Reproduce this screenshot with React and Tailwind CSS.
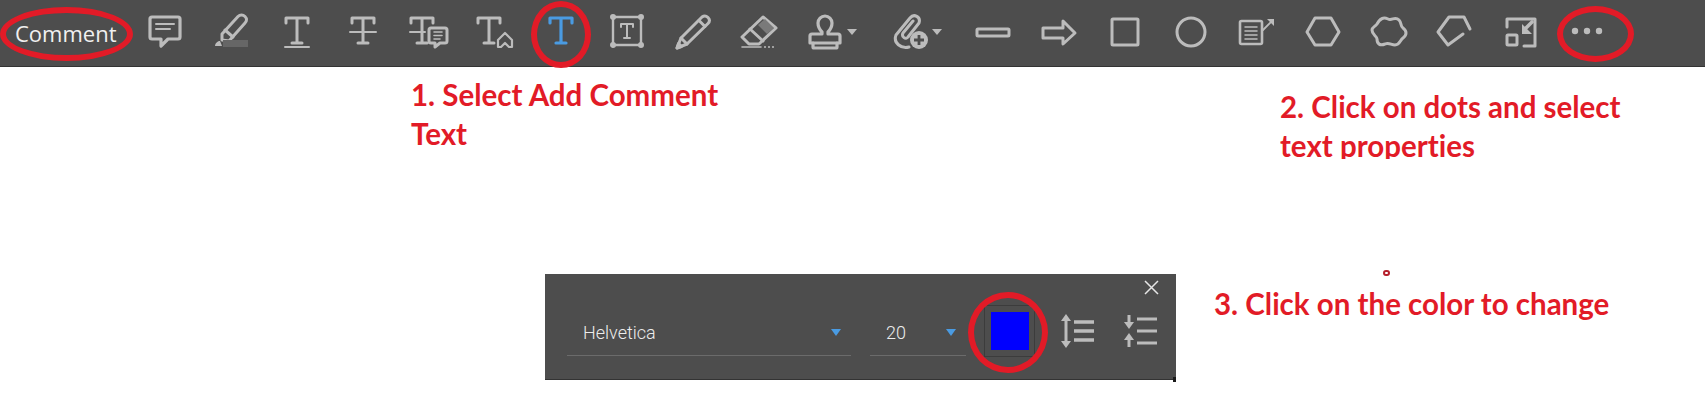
const stroke = "#bcbcbc";

function Box({ children, color = stroke, sw = 3 }) {
  return (
    <svg width="40" height="40" viewBox="0 0 40 40" fill="none" stroke={color} strokeWidth={sw} strokeLinecap="round" strokeLinejoin="round">
      {children}
    </svg>
  );
}

function SerifT({ x = 0, y = 0, w = 22, h = 25 }) {
  const r = x + w;
  const m = x + w / 2;
  const b = y + h;
  return (
    <path d={`M${x} ${y + 5}V${y}H${r}V${y + 5}M${m} ${y}V${b}M${m - 5} ${b}H${m + 5}`} />
  );
}

const icons = {
  note: (
    <Box sw={3.2}>
      <path d="M7 4H33A2 2 0 0 1 35 6V24A2 2 0 0 1 33 26H23L16 33V26H7A2 2 0 0 1 5 24V6A2 2 0 0 1 7 4Z" />
      <path d="M11 11H29M11 16H25" strokeWidth="2" />
    </Box>
  ),
  highlight: (
    <Box>
      <path d="M11 21L27 3.500C29 1.500 32 1.500 34 3.500C36 5.500 36 8 34 10L18 28L11 27Z" />
      <path d="M14 17L22 24" />
      <path d="M4 33C4 30 7 28 9 28L11 33Z" fill={stroke} stroke="none" />
      <rect x="12" y="27" width="25" height="7" fill="#666666" stroke="none" />
    </Box>
  ),
  underline: (
    <Box>
      <SerifT x={9} y={5} />
      <path d="M8 34H32" strokeWidth="2" />
    </Box>
  ),
  strike: (
    <Box>
      <SerifT x={9} y={5} />
      <path d="M7 19H33" strokeWidth="2" fill="none" />
    </Box>
  ),
  replace: (
    <Box>
      <SerifT x={2} y={5} />
      <path d="M1 19H16" strokeWidth="2" />
      <path d="M22 15H36A2 2 0 0 1 38 17V28A2 2 0 0 1 36 30H31L26 34V30H22A2 2 0 0 1 20 28V17A2 2 0 0 1 22 15Z" fill="#4d4d4d" />
      <path d="M25 19H33M25 22.500H33M25 26H31" strokeWidth="1.600" />
    </Box>
  ),
  caret: (
    <Box>
      <SerifT x={3} y={5} />
      <path d="M23 27L30 20L37 27V34H34L30 30L26 34H23Z" strokeWidth="2.200" fill="#4d4d4d" />
    </Box>
  ),
  blueT: (
    <Box color="#4a9be2" sw={3.2}>
      <SerifT x={9} y={5} />
    </Box>
  ),
  textbox: (
    <Box sw={2.400}>
      <rect x="6" y="4" width="28" height="28" />
      <circle cx="6" cy="4" r="1.800" />
      <circle cx="34" cy="4" r="1.800" />
      <circle cx="6" cy="32" r="1.800" />
      <circle cx="34" cy="32" r="1.800" />
      <path d="M14 14V11H26V14M20 11V25M17 25H23" strokeWidth="2" />
    </Box>
  ),
  pencil: (
    <Box>
      <path d="M4 35L8 25L29 4C31 2.500 33 2.500 35 4.500C37 6.500 37 8.500 35 10.500L14 31Z" />
      <path d="M8 25L14 31M26 7.500L32 13.500" />
      <path d="M4 35L5.500 30.500L8.500 33.500Z" fill={stroke} />
    </Box>
  ),
  eraser: (
    <Box>
      <path d="M3 24L24 4L37 15L20 31H10Z" />
      <path d="M11 16L24 28" />
      <path d="M19 12L26 6L35 15L28 21Z" fill="#7a7a7a" stroke="none" />
      <path d="M3 34H22" strokeWidth="1.600" />
      <path d="M25 34H37" strokeWidth="1.600" strokeDasharray="2 2" strokeLinecap="butt" />
    </Box>
  ),
  stamp: (
    <Box sw={3.2}>
      <path d="M17 19C14 16 13 13 13 10A7 7 0 0 1 27 10C27 13 26 16 23 19V21H33A2 2 0 0 1 35 23V30H5V23A2 2 0 0 1 7 21H17Z" />
      <path d="M8 30V34A1 1 0 0 0 9 35H31A1 1 0 0 0 32 34V30" />
    </Box>
  ),
  clip: (
    <Box sw={3}>
      <path d="M19 34C11 36 3 30 6 22L20 5C24 0 31 4 29 10L18 24C16 27 11 24 13 20L23 8" />
      <circle cx="29" cy="27" r="9" fill={stroke} stroke="none" />
      <path d="M29 22V32M24 27H34" stroke="#4d4d4d" strokeWidth="2.800" strokeLinecap="butt" />
    </Box>
  ),
  line: (
    <Box>
      <rect x="4" y="16" width="32" height="7" rx="1" />
    </Box>
  ),
  arrow: (
    <Box>
      <path d="M4 15H24V8L36 20L24 31V25H4Z" />
    </Box>
  ),
  rect: (
    <Box>
      <rect x="7" y="6" width="26" height="26" rx="1" />
    </Box>
  ),
  circle: (
    <Box>
      <circle cx="20" cy="19" r="14" />
    </Box>
  ),
  callout: (
    <Box sw={2.6}>
      <rect x="3" y="8" width="22" height="23" rx="1.500" />
      <path d="M8 14H20M8 18H20M8 22H20M8 26H20" strokeWidth="1.500" />
      <path d="M26 17L36 7" strokeWidth="1.800" />
      <path d="M30 6H37V13Z" fill={stroke} stroke="none" />
    </Box>
  ),
  hexagon: (
    <Box>
      <path d="M4 19L12 5H28L36 19L28 32H12Z" />
    </Box>
  ),
  cloud: (
    <Box>
      <path d="M8 11C11 5 15 4 19 6C23 8 26 3 30 7C33 10 31 13 34 15C38 18 38 22 34 25C31 27 31 32 26 32C22 32 20 29 16 31C11 33 8 31 8 26C8 23 3 22 3 17C3 14 6 14 8 11Z" />
    </Box>
  ),
  polygon: (
    <Box>
      <path d="M35 16L29 4H14L3 19L13 32L28 21" />
    </Box>
  ),
  fit: (
    <Box>
      <path d="M6 14V6H34V33H23" />
      <rect x="6" y="22" width="10" height="10" rx="1" />
      <path d="M31 9L25 15" strokeWidth="3.600" />
      <path d="M21 11V21H31Z" fill={stroke} stroke="none" />
    </Box>
  ),
  dots: (
    <svg width="40" height="40" viewBox="0 0 40 40" fill={stroke}>
      <circle cx="8" cy="18" r="3.200" />
      <circle cx="20" cy="18" r="3.200" />
      <circle cx="32" cy="18" r="3.200" />
    </svg>
  ),
};

function Tool({ name, after }) {
  return (
    <div className="flex h-full items-center">
      <div className="flex h-full w-[66px] items-center justify-center">{icons[name]}</div>
      {after}
    </div>
  );
}

function Caret({ gap }) {
  return (
    <>
      <span className="ml-[-11px] mb-[3px] h-0 w-0 border-x-[5px] border-t-[6px] border-x-transparent border-t-[#bcbcbc]" />
      <span className={gap} />
    </>
  );
}

function Ring({ className }) {
  return <div className={`absolute rounded-[50%] border-[6px] border-[#e21b27] ${className}`} />;
}

function Note({ className, children }) {
  return (
    <div className={`absolute whitespace-nowrap font-['Lato','Carlito',sans-serif] text-[29.500px] leading-[39px] font-bold text-[#e21b27] [font-variant-ligatures:none] ${className}`}>
      {children}
    </div>
  );
}

function Select({ label, width }) {
  return (
    <div className={`relative flex h-[51px] items-center border-b border-[#6b6b6b] pt-[4px] ${width}`}>
      <span className="pl-[16px] font-['Roboto',sans-serif] text-[18px] font-light text-[#ececec]">{label}</span>
      <span className="absolute top-[24px] right-[10px] h-0 w-0 border-x-[5.500px] border-t-[7px] border-x-transparent border-t-[#4a9be2]" />
    </div>
  );
}

export default function App() {
  const row = ["note", "highlight", "underline", "strike", "replace", "caret", "blueT", "textbox", "pencil", "eraser"];
  const rest = ["line", "arrow", "rect", "circle", "callout", "hexagon", "cloud", "polygon", "fit", "dots"];
  return (
    <div className="relative h-[411px] w-[1705px] overflow-hidden bg-white">
      <header className="flex h-[67px] items-center border-b border-[#333333] bg-[#4d4d4d] pl-[15px]">
        <span className="w-[117px] font-['Open_Sans',sans-serif] text-[22px] font-medium text-[#f0f0f0]">Comment</span>
        {row.map((n) => <Tool key={n} name={n} />)}
        <Tool name="stamp" after={<Caret gap="w-[20px]" />} />
        <Tool name="clip" after={<Caret gap="w-[18px]" />} />
        {rest.map((n) => <Tool key={n} name={n} />)}
      </header>

      <section className="relative mt-[207px] ml-[545px] h-[106px] w-[631px] border-b border-[#333333] bg-[#4d4d4d] pt-[31px] pl-[22px]">
        <div className="flex items-start">
          <Select label="Helvetica" width="w-[284px]" />
          <Select label="20" width="ml-[19px] w-[96px]" />
          <div className="ml-[18px] flex h-[52px] w-[51px] items-center justify-center border border-[#3c3c3c]">
            <div className="h-[38px] w-[38px] bg-[#0000ff]" />
          </div>
          <div className="ml-[25px] flex h-[52px] items-center">
            <svg width="36" height="36" viewBox="0 0 36 36" fill="none" stroke="#bcbcbc" strokeWidth="3.600">
              <path d="M6 6V30" strokeWidth="3" />
              <path d="M6 1L11 8H1ZM6 35L11 28H1Z" fill="#bcbcbc" stroke="none" />
              <path d="M14 9H34M14 18H34M14 27H34" />
            </svg>
          </div>
          <div className="ml-[27px] flex h-[52px] items-center">
            <svg width="36" height="36" viewBox="0 0 36 36" fill="none" stroke="#bcbcbc" strokeWidth="3.200">
              <path d="M6 2V10" strokeWidth="3" />
              <path d="M6 16L11 9H1Z" fill="#bcbcbc" stroke="none" />
              <path d="M6 20L11 27H1Z" fill="#bcbcbc" stroke="none" />
              <path d="M6 26V34" strokeWidth="3" />
              <path d="M14 6H34M14 18H34M14 30H34" />
            </svg>
          </div>
        </div>
        <svg className="absolute top-[6px] right-[17px]" width="15" height="15" viewBox="0 0 15 15" stroke="#e6e6e6" strokeWidth="1.500">
          <path d="M1 1L14 14M14 1L1 14" />
        </svg>
        <span className="absolute right-0 bottom-[-3px] h-[5px] w-[3px] bg-[#1a1a1a]" />
      </section>

      <Ring className="top-[7px] left-0 h-[54px] w-[133px]" />
      <Ring className="top-[1px] left-[531px] h-[67px] w-[60px]" />
      <Ring className="top-[6px] left-[1557px] h-[56px] w-[77px]" />
      <Ring className="top-[292px] left-[968px] h-[81px] w-[80px]" />

      <Note className="top-[75px] left-[411px]">1. Select Add Comment<br />Text</Note>
      <div className="absolute top-[87px] left-[1280px] h-[72px] overflow-hidden">
        <div className="whitespace-nowrap font-['Lato','Carlito',sans-serif] text-[29.500px] leading-[39px] font-bold text-[#e21b27] [font-variant-ligatures:none]">
          2. Click on dots and select<br />text properties
        </div>
      </div>
      <Note className="top-[284px] left-[1214px]">3. Click on the color to change</Note>
      <span className="absolute top-[270px] left-[1383px] h-[6px] w-[7px] rounded-full border-2 border-[#b5202c]" />
    </div>
  );
}
